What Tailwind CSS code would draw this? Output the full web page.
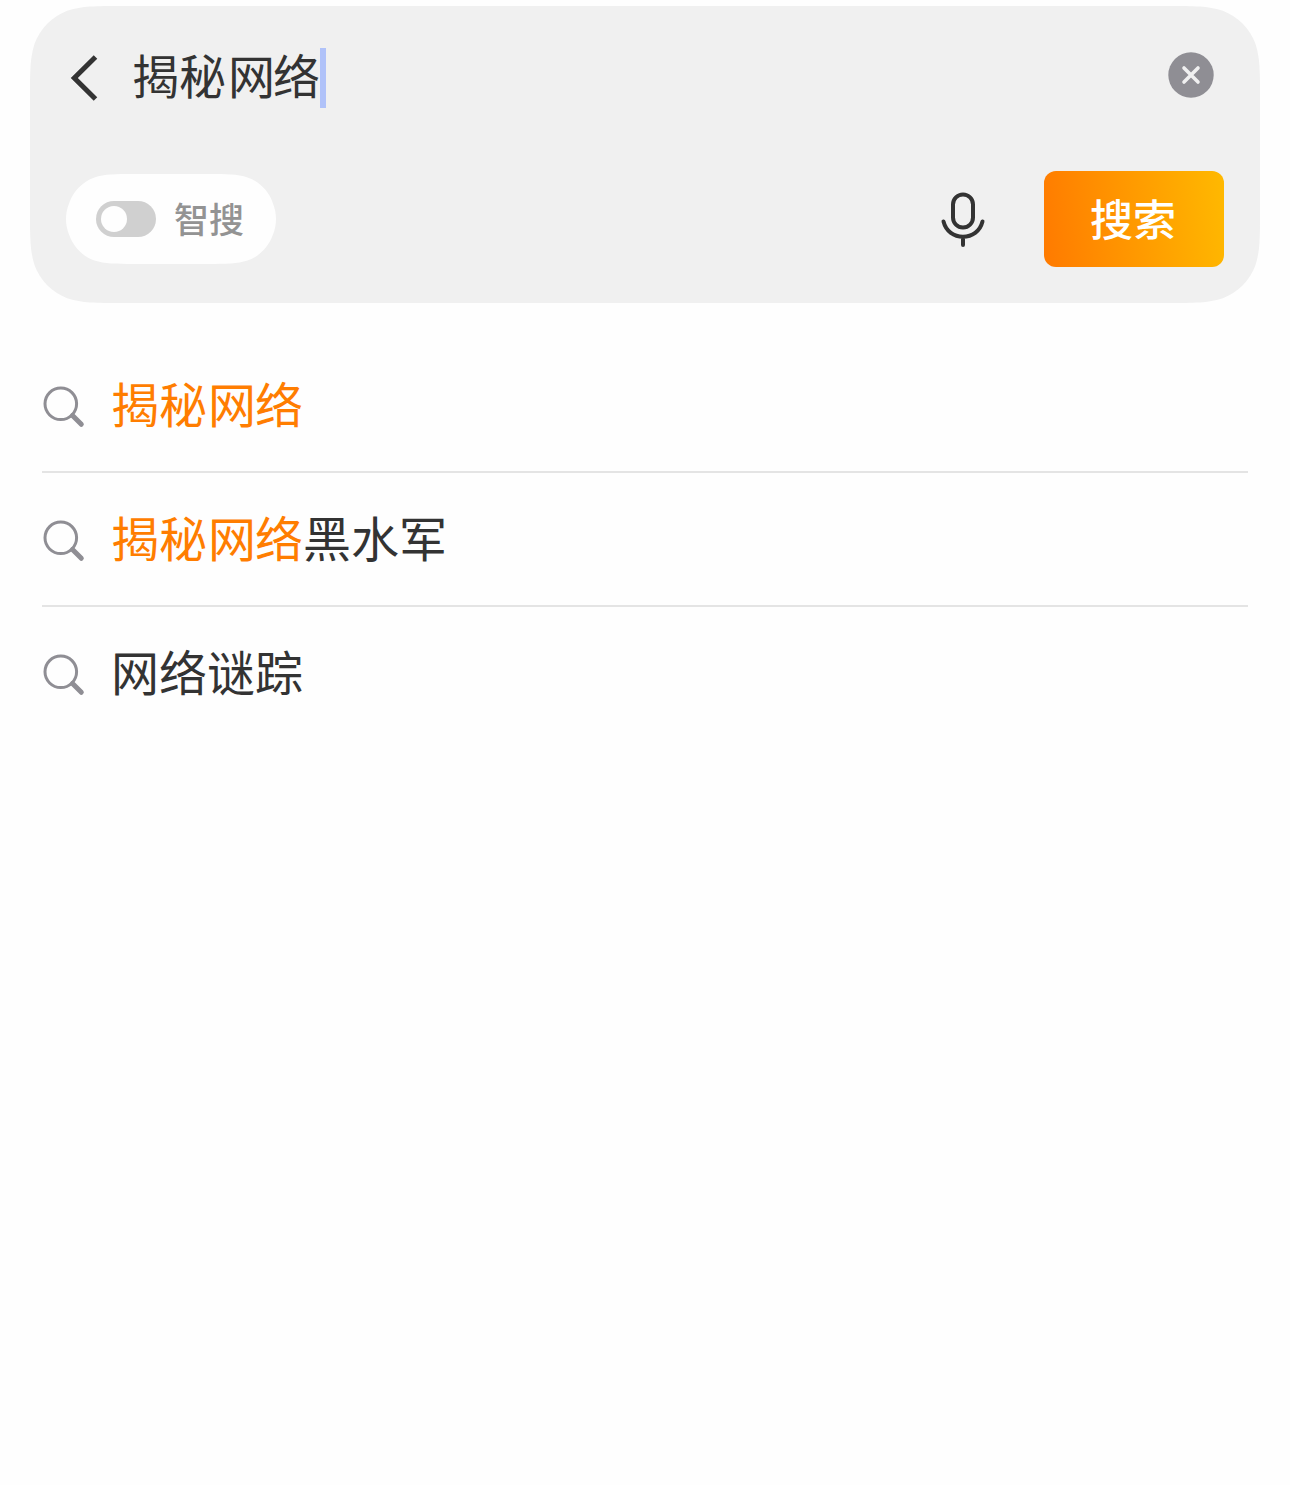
<!DOCTYPE html>
<html lang="zh-CN">
<head>
  <meta charset="UTF-8" />
  <meta name="viewport" content="width=device-width, initial-scale=1.0"/>
  <title>搜索</title>
  <script src="https://cdn.jsdelivr.net/npm/@tailwindcss/browser@4"></script>
</head>
<body class="min-h-screen bg-[#fefefe] text-[#333] font-['Noto_Sans_CJK_SC',sans-serif]">

  <!-- 搜索框 -->
  <div class="px-[30px] pt-[6px]">
    <div class="h-[297px] bg-[#f0f0f0] flex flex-col justify-between pt-[42px] pb-9 px-9 [clip-path:path('M92_0H1138C1164.7_0_1177.9_0_1192.1_4.5C1207.6_10.1_1219.9_22.4_1225.5_37.9C1230_52.1_1230_65.3_1230_92V205C1230_231.7_1230_244.9_1225.5_259.1C1219.9_274.6_1207.6_286.9_1192.1_292.5C1177.9_297_1164.7_297_1138_297H92C65.3_297_52.1_297_37.9_292.5C22.4_286.9_10.1_274.6_4.5_259.1C0_244.9_0_231.7_0_205V92C0_65.3_0_52.1_4.5_37.9C10.1_22.4_22.4_10.1_37.9_4.5C52.1_0_65.3_0_92_0Z')]">
      <div class="flex h-[60px] items-center">
        <svg class="w-8 h-[60px]" viewBox="0 0 32 60" fill="none" stroke="#333" stroke-width="5">
          <path d="M29.500 9 8.300 30l21.200 21"/>
        </svg>
        <div class="ml-[34px] pb-2 text-[47px] leading-[60px]">揭秘<span class="ml-[2px] -mr-[2px]">网</span>络</div>
        <div class="w-[6px] h-[60px] bg-[#b0c2f9]"></div>
        <svg class="ml-auto mr-[10px] mb-[6px] size-[46px]" viewBox="0 0 46 46">
          <circle cx="23" cy="23" r="22.7" fill="#8f8e94"/>
          <path d="m16 16 14 14M30 16 16 30" stroke="#f0f0f0" stroke-width="3.6" stroke-linecap="round"/>
        </svg>
      </div>

      <div class="flex h-24 items-center">
        <div class="flex items-center w-[210px] h-[90px] pl-[30px] bg-[#fefefe] [clip-path:path('M69_0H141C161_0_171_0_181.6_3.4C193.2_7.6_202.4_16.8_206.6_28.4C208.9_34_210_39.5_210_45C210_50.5_208.9_56_206.6_61.6C202.4_73.2_193.2_82.4_181.6_86.6C171_90_161_90_141_90H69C49_90_39_90_28.4_86.6C16.8_82.4_7.6_73.2_3.4_61.6C1.1_56_0_50.5_0_45C0_39.5_1.1_34_3.4_28.4C7.6_16.8_16.8_7.6_28.4_3.4C39_0_49_0_69_0Z')]">
          <div class="flex items-center w-[60px] h-9 pl-[5px] rounded-full bg-[#d0d0d0]">
            <div class="size-[26px] rounded-full bg-[#fefefe]"></div>
          </div>
          <span class="ml-[18px] pb-[2px] text-[35px] leading-[60px] font-medium text-[#939393]">智搜</span>
        </div>

        <svg class="ml-auto mr-[58px] w-[46px] h-[56px]" viewBox="0 0 46 56" fill="none" stroke="#333" stroke-width="4" stroke-linecap="round">
          <rect x="13" y="3.500" width="20" height="33" rx="10"/>
          <path d="M3.500 30.500C6 40.500 14 45.700 23 45.700S40 40.500 42.500 30.500M23 46v8"/>
        </svg>
        <button class="w-[180px] h-24 pb-1 pr-[2px] rounded-xl bg-linear-[83deg] from-[#ff7a00] to-[#ffb900] text-white text-[43px] leading-[60px] font-medium">搜索</button>
      </div>
    </div>
  </div>

  <!-- 联想词 -->
  <ul class="mt-9 mx-[42px] text-[48px] leading-[72px]">
    <li class="flex items-center h-[134px] border-b-2 border-[#e4e4e4]">
      <svg class="mt-1 w-[44px] h-[44px]" viewBox="0 0 44 44" fill="none" stroke="#8f8e94">
        <circle cx="18.800" cy="18.800" r="15.800" stroke-width="3"/>
        <path d="m30.500 30.500 8.800 8.800" stroke-width="5" stroke-linecap="round"/>
      </svg>
      <span class="ml-[25px] pb-[6px] text-[#ff7d00]">揭秘<span class="ml-px -mr-px">网</span>络</span>
    </li>
    <li class="flex items-center h-[134px] border-b-2 border-[#e4e4e4]">
      <svg class="mt-1 w-[44px] h-[44px]" viewBox="0 0 44 44" fill="none" stroke="#8f8e94">
        <circle cx="18.800" cy="18.800" r="15.800" stroke-width="3"/>
        <path d="m30.500 30.500 8.800 8.800" stroke-width="5" stroke-linecap="round"/>
      </svg>
      <span class="ml-[25px] pb-[6px] text-[#ff7d00]">揭秘<span class="ml-px -mr-px">网</span>络</span><span class="pb-[6px]">黑水军</span>
    </li>
    <li class="flex items-center h-[132px]">
      <svg class="mt-1 w-[44px] h-[44px]" viewBox="0 0 44 44" fill="none" stroke="#8f8e94">
        <circle cx="18.800" cy="18.800" r="15.800" stroke-width="3"/>
        <path d="m30.500 30.500 8.800 8.800" stroke-width="5" stroke-linecap="round"/>
      </svg>
      <span class="ml-[25px] pb-[6px]">网络谜踪</span>
    </li>
  </ul>

</body>
</html>
